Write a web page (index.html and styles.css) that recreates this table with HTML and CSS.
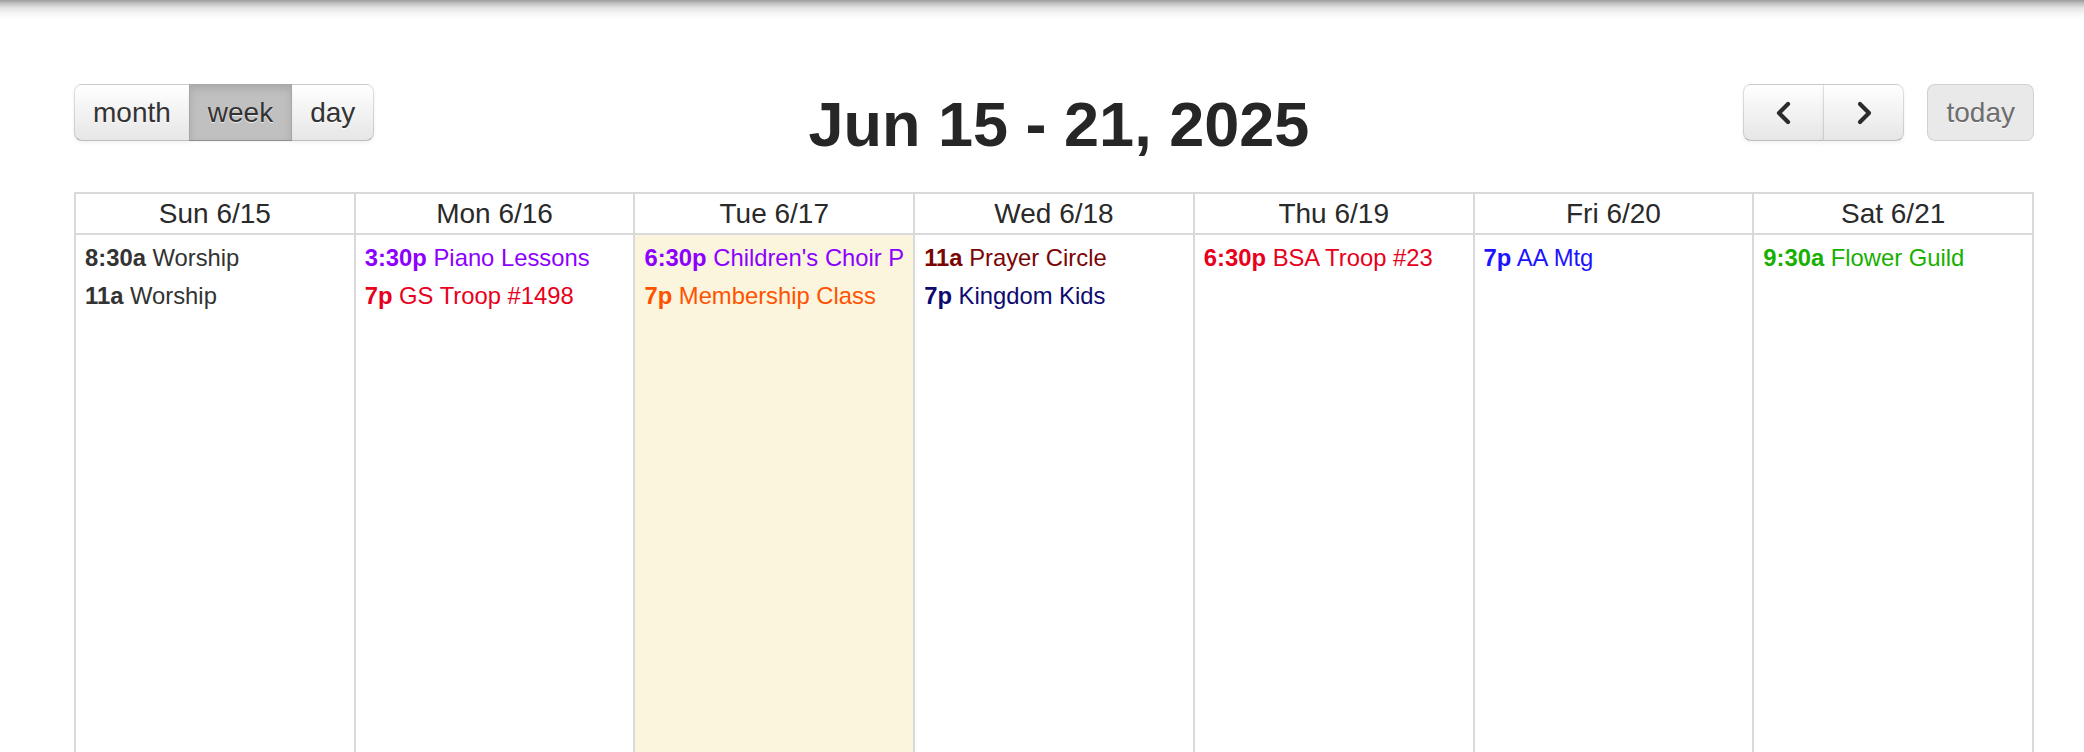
FILE: index.html
```html
<!DOCTYPE html>
<html>
<head>
<meta charset="utf-8">
<title>Calendar</title>
<link rel="stylesheet" href="styles.css">
</head>
<body>
<div class="topshade"></div>
<div class="calendar">
  <div class="toolbar">
    <div class="btn-group">
      <button class="btn btn-first">month</button>
      <button class="btn btn-active">week</button>
      <button class="btn btn-last">day</button>
    </div>
    <h2 class="title">Jun 15 - 21, 2025</h2>
    <div class="right-tools">
      <div class="btn-group">
        <button class="btn btn-first btn-icon" aria-label="prev">
          <svg width="20" height="24" viewBox="0 0 20 24"><polyline points="14,3 5,12 14,21" fill="none" stroke="#2b2b2b" stroke-width="4.2" stroke-linecap="round" stroke-linejoin="round"/></svg>
        </button>
        <button class="btn btn-last btn-icon" aria-label="next">
          <svg width="20" height="24" viewBox="0 0 20 24"><polyline points="6,3 15,12 6,21" fill="none" stroke="#2b2b2b" stroke-width="4.2" stroke-linecap="round" stroke-linejoin="round"/></svg>
        </button>
      </div>
      <button class="btn btn-single btn-disabled">today</button>
    </div>
  </div>

  <div class="grid">
    <div class="head">Sun 6/15</div>
    <div class="head">Mon 6/16</div>
    <div class="head">Tue 6/17</div>
    <div class="head">Wed 6/18</div>
    <div class="head">Thu 6/19</div>
    <div class="head">Fri 6/20</div>
    <div class="head head-last">Sat 6/21</div>

    <div class="day">
      <div class="event c-grey"><b>8:30a</b> Worship</div>
      <div class="event c-grey"><b>11a</b> Worship</div>
    </div>
    <div class="day">
      <div class="event c-purple"><b>3:30p</b> Piano Lessons</div>
      <div class="event c-red"><b>7p</b> GS Troop #1498</div>
    </div>
    <div class="day today">
      <div class="event c-purple"><b>6:30p</b> Children's Choir P</div>
      <div class="event c-orange"><b>7p</b> Membership Class</div>
    </div>
    <div class="day">
      <div class="event c-maroon"><b>11a</b> Prayer Circle</div>
      <div class="event c-navy"><b>7p</b> Kingdom Kids</div>
    </div>
    <div class="day">
      <div class="event c-red"><b>6:30p</b> BSA Troop #23</div>
    </div>
    <div class="day">
      <div class="event c-blue"><b>7p</b> AA Mtg</div>
    </div>
    <div class="day day-last">
      <div class="event c-green"><b>9:30a</b> Flower Guild</div>
    </div>
  </div>
</div>
</body>
</html>
```

FILE: styles.css
```css
html, body {
  margin: 0;
  padding: 0;
  background: #fff;
}

body {
  font-family: "Liberation Sans", Arial, Helvetica, sans-serif;
  color: #333;
  overflow: hidden;
}

.topshade {
  height: 20px;
  background: linear-gradient(to bottom, #9a9a9a 0px, #bdbdbd 3px, #e4e4e4 8px, #f7f7f7 14px, #ffffff 20px);
}

.calendar {
  margin: 64px 0 0 74px;
  width: 1960px;
}

.toolbar {
  display: flex;
  justify-content: space-between;
  align-items: flex-start;
  height: 57px;
}

.btn-group {
  display: flex;
}

.btn {
  font-family: "Liberation Sans", Arial, Helvetica, sans-serif;
  font-size: 28px;
  height: 57px;
  line-height: 55px;
  padding: 0 18px;
  margin: 0;
  color: #333;
  background: linear-gradient(to bottom, #ffffff, #e6e6e6);
  border: 1px solid rgba(0, 0, 0, 0.12);
  border-bottom-color: rgba(0, 0, 0, 0.26);
  border-radius: 0;
  text-shadow: 0 1px 1px rgba(255, 255, 255, 0.75);
  box-shadow: inset 0 1px 0 rgba(255, 255, 255, 0.2), 0 2px 4px rgba(0, 0, 0, 0.06);
  cursor: pointer;
}

.btn + .btn {
  margin-left: -1px;
}

.btn-first {
  border-radius: 8px 0 0 8px;
}

.btn-last {
  border-radius: 0 8px 8px 0;
}

.btn-single {
  border-radius: 8px;
}

.btn-active {
  background: #c0c0c0;
  box-shadow: inset 0 4px 8px rgba(0, 0, 0, 0.12), 0 1px 2px rgba(0, 0, 0, 0.05);
  position: relative;
  z-index: 1;
}

.btn-icon {
  width: 81px;
  padding: 0;
  display: flex;
  align-items: center;
  justify-content: center;
}

.btn-icon svg {
  display: block;
  margin-top: 1px;
}

.btn-disabled {
  background: #e9e9e9;
  color: #6e6e6e;
  box-shadow: none;
  border-color: rgba(0, 0, 0, 0.1);
  cursor: default;
  padding: 0 18px;
}

.right-tools {
  display: flex;
  gap: 23px;
}

.title {
  margin: 0;
  font-size: 63px;
  font-weight: bold;
  color: #262626;
  line-height: 80px;
  letter-spacing: 0;
}

.grid {
  margin-top: 51px;
  display: grid;
  grid-template-columns: repeat(7, 1fr);
  border-top: 2px solid #d9d9d9;
  border-left: 2px solid #d9d9d9;
}

.head {
  border-right: 2px solid #d9d9d9;
  border-bottom: 2px solid #d9d9d9;
  height: 39px;
  line-height: 39px;
  font-size: 28px;
  text-align: center;
  color: #2a2a2a;
}

.day {
  border-right: 2px solid #d9d9d9;
  height: 620px;
  padding-top: 4px;
  overflow: hidden;
  min-width: 0;
}

.today {
  background: #fbf5dd;
}

.event {
  margin: 0 4px;
  padding: 0 6px 0 5px;
  font-size: 23.8px;
  height: 38px;
  line-height: 38px;
  white-space: nowrap;
  overflow: hidden;
}

.event b {
  font-weight: bold;
}

.c-grey { color: #333333; }
.c-purple { color: #8d00ff; }
.c-red { color: #e8001c; }
.c-orange { color: #ff5200; }
.c-maroon { color: #7a0505; }
.c-navy { color: #0d0a70; }
.c-blue { color: #1c14ff; }
.c-green { color: #17b000; }
```
